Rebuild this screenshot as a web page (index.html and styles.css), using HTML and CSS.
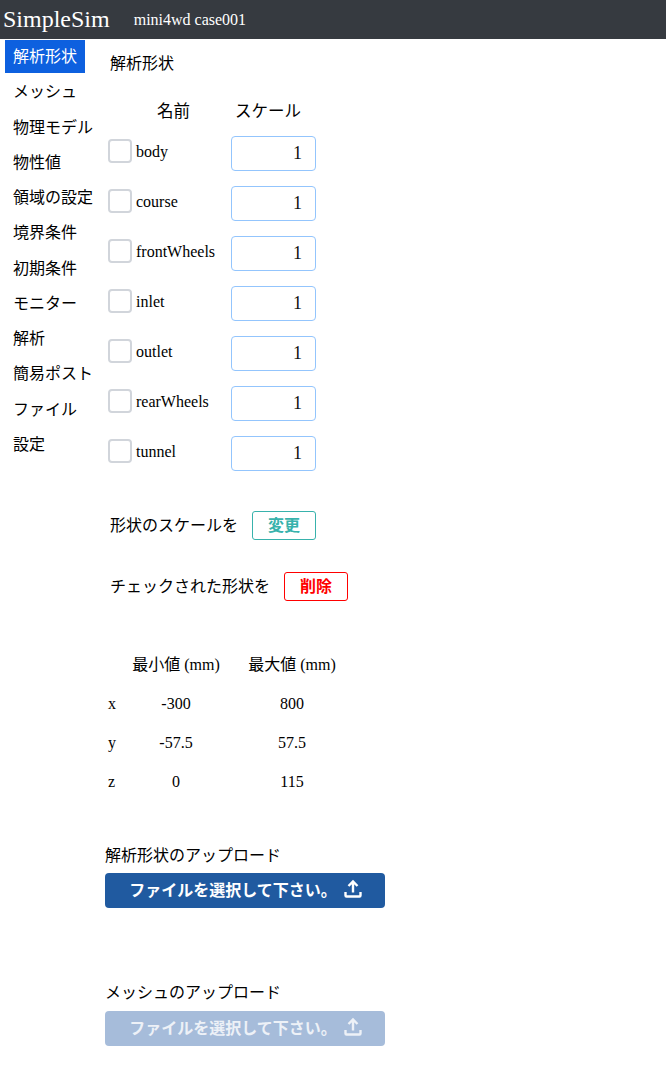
FILE: index.html
```html
<!DOCTYPE html>
<html lang='ja'>
<head>
	<meta charset='UTF-8'>
	<title>SimpleSim</title>
	<link rel="stylesheet" href="styles.css">
</head>
<body>
<header class='topbar'>
	<span class='topbar__logo'>SimpleSim</span>
	<span class='topbar__case'>mini4wd case001</span>
</header>
<div class='layout'>
	<nav class='sidenav'>
		<a class='sidenav__item sidenav__item--active'>解析形状</a>
		<a class='sidenav__item'>メッシュ</a>
		<a class='sidenav__item'>物理モデル</a>
		<a class='sidenav__item'>物性値</a>
		<a class='sidenav__item'>領域の設定</a>
		<a class='sidenav__item'>境界条件</a>
		<a class='sidenav__item'>初期条件</a>
		<a class='sidenav__item'>モニター</a>
		<a class='sidenav__item'>解析</a>
		<a class='sidenav__item'>簡易ポスト</a>
		<a class='sidenav__item'>ファイル</a>
		<a class='sidenav__item'>設定</a>
	</nav>
	<main class='content'>
		<h2 class='content__title'>解析形状</h2>

		<div class='shape-head'>
			<span class='shape-head__name'>名前</span>
			<span class='shape-head__scale'>スケール</span>
		</div>
		<div class='shape-row'>
			<span class='shape-row__check'></span>
			<span class='shape-row__name'>body</span>
			<input class='shape-row__input' type='text' value='1'>
		</div>
		<div class='shape-row'>
			<span class='shape-row__check'></span>
			<span class='shape-row__name'>course</span>
			<input class='shape-row__input' type='text' value='1'>
		</div>
		<div class='shape-row'>
			<span class='shape-row__check'></span>
			<span class='shape-row__name'>frontWheels</span>
			<input class='shape-row__input' type='text' value='1'>
		</div>
		<div class='shape-row'>
			<span class='shape-row__check'></span>
			<span class='shape-row__name'>inlet</span>
			<input class='shape-row__input' type='text' value='1'>
		</div>
		<div class='shape-row'>
			<span class='shape-row__check'></span>
			<span class='shape-row__name'>outlet</span>
			<input class='shape-row__input' type='text' value='1'>
		</div>
		<div class='shape-row'>
			<span class='shape-row__check'></span>
			<span class='shape-row__name'>rearWheels</span>
			<input class='shape-row__input' type='text' value='1'>
		</div>
		<div class='shape-row'>
			<span class='shape-row__check'></span>
			<span class='shape-row__name'>tunnel</span>
			<input class='shape-row__input' type='text' value='1'>
		</div>

		<div class='action action--scale'>
			<span class='action__label'>形状のスケールを</span>
			<button class='action__button action__button--teal'>変更</button>
		</div>
		<div class='action action--delete'>
			<span class='action__label'>チェックされた形状を</span>
			<button class='action__button action__button--red'>削除</button>
		</div>

		<div class='bounds'>
			<span></span><span>最小値 (mm)</span><span>最大値 (mm)</span>
			<span>x</span><span>-300</span><span>800</span>
			<span>y</span><span>-57.5</span><span>57.5</span>
			<span>z</span><span>0</span><span>115</span>
		</div>

		<div class='upload upload--shape'>
			<p class='upload__label'>解析形状のアップロード</p>
			<button class='upload__button'>
				ファイルを選択して下さい。
				<svg class='upload__icon' viewBox='0 0 24 24'><path d='M12 15.5V5M7.5 9 12 4.5 16.5 9M4.5 15v3.5a1 1 0 0 0 1 1h13a1 1 0 0 0 1-1V15' fill='none' stroke='currentColor' stroke-width='2.4'/></svg>
			</button>
		</div>
		<div class='upload upload--mesh'>
			<p class='upload__label'>メッシュのアップロード</p>
			<button class='upload__button upload__button--disabled'>
				ファイルを選択して下さい。
				<svg class='upload__icon' viewBox='0 0 24 24'><path d='M12 15.5V5M7.5 9 12 4.5 16.5 9M4.5 15v3.5a1 1 0 0 0 1 1h13a1 1 0 0 0 1-1V15' fill='none' stroke='currentColor' stroke-width='2.4'/></svg>
			</button>
		</div>
	</main>
</div>
</body>
</html>
```

FILE: styles.css
```css
body {
    margin: 0;
    font-family: "Liberation Serif", "Noto Sans CJK JP", serif;
    color: #000;
    background-color: #fff;
}

.topbar {
    display: flex;
    align-items: center;
    height: 39px;
    padding-left: 3px;
    background-color: #363a40;
    color: #fff;
}

.topbar__logo {
    font-size: 24px;
    margin-right: 24px;
}

.topbar__case {
    font-size: 16px;
}

.layout {
    display: flex;
}

.sidenav {
    display: flex;
    flex-direction: column;
    width: 105px;
    flex-shrink: 0;
    padding-left: 5px;
    padding-top: 1px;
    box-sizing: border-box;
}

.sidenav__item {
    align-self: flex-start;
    height: 33px;
    margin-bottom: 2.25px;
    padding: 0 8px;
    font-size: 16px;
    line-height: 33px;
    white-space: nowrap;
}

.sidenav__item--active {
    background-color: #0d60df;
    color: #fff;
}

.content {
    flex: 1;
}

.content__title {
    margin: 13px 0 0 5px;
    font-size: 16px;
    font-weight: normal;
    line-height: 24px;
}

.shape-head {
    display: flex;
    height: 25px;
    margin-top: 23px;
    margin-bottom: 12px;
    font-size: 16.5px;
    line-height: 25px;
}

.shape-head__name {
    width: 130px;
    padding-left: 52px;
    box-sizing: border-box;
}

.shape-head__scale {
    width: 70px;
}

.shape-row {
    display: flex;
    align-items: flex-start;
    height: 50px;
    font-size: 16px;
}

.shape-row__check {
    width: 20px;
    height: 20px;
    margin: 3px 4px 0 3px;
    border: 2px solid #d1d5db;
    border-radius: 4px;
    flex-shrink: 0;
}

.shape-row__name {
    width: 95px;
    line-height: 24px;
    margin-top: 4px;
}

.shape-row__input {
    width: 85px;
    height: 35px;
    padding: 0 13px 0 0;
    box-sizing: border-box;
    border: 1px solid #93c5fd;
    border-radius: 4px;
    font-family: inherit;
    font-size: 18px;
    text-align: right;
    color: #111;
    outline: none;
}

.action {
    display: flex;
    align-items: center;
    margin-left: 5px;
    font-size: 16px;
    height: 29px;
    gap: 14px;
}

.action--scale {
    margin-top: 25px;
}

.action--delete {
    margin-top: 32px;
}

.action__label {
    margin-top: -3px;
}

.action__button {
    width: 64px;
    height: 29px;
    padding: 0 0 3px;
    background-color: #fff;
    border-radius: 3px;
    font-family: "Noto Sans CJK JP", sans-serif;
    font-size: 16px;
    font-weight: bold;
    line-height: 1;
}

.action__button--teal {
    border: 1px solid #38b2ac;
    color: #38b2ac;
}

.action__button--red {
    border: 1px solid #f00;
    color: #f00;
}

.bounds {
    display: grid;
    grid-template-columns: 22px 98px 134px;
    grid-template-rows: 42px;
    grid-auto-rows: 39px;
    align-items: center;
    margin-top: 41px;
    font-size: 16px;
    text-align: center;
}

.bounds span {
    white-space: nowrap;
}

.bounds span:nth-child(3n+1) {
    text-align: left;
    padding-left: 3px;
}

.upload__label {
    margin: 0;
    font-size: 16px;
    line-height: 24px;
}

.upload--shape {
    margin-top: 43px;
}

.upload--mesh {
    margin-top: 73px;
}

.upload__button {
    display: flex;
    align-items: center;
    justify-content: center;
    gap: 4px;
    width: 280px;
    height: 35px;
    margin-top: 5px;
    padding: 0 0 3px 4px;
    border: none;
    border-radius: 4px;
    background-color: #205aa0;
    color: #fff;
    font-family: "Noto Sans CJK JP", sans-serif;
    font-size: 16px;
    font-weight: bold;
}

.upload__button--disabled {
    margin-top: 6px;
    background-color: #a6bcda;
    color: #edf1f7;
}

.upload__icon {
    width: 24px;
    height: 24px;
}
```
